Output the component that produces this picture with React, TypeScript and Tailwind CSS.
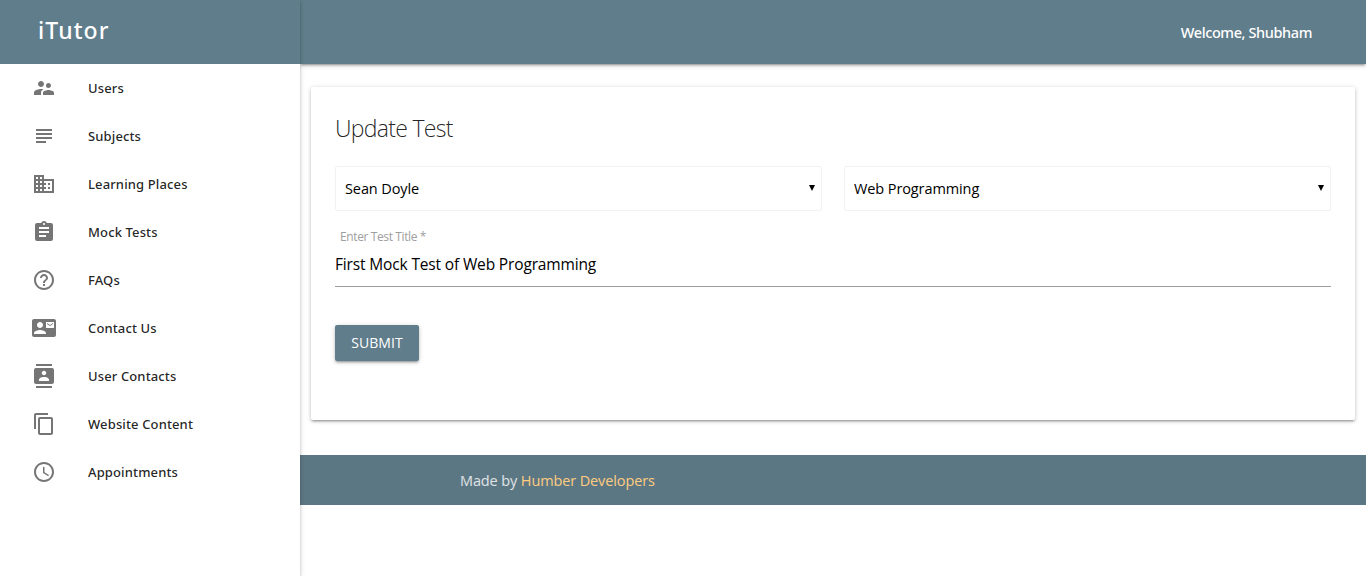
import {
  MdSupervisorAccount,
  MdSubject,
  MdBusiness,
  MdAssignment,
  MdHelpOutline,
  MdContactMail,
  MdContacts,
  MdContentCopy,
  MdAccessTime,
} from "react-icons/md";

const links = [
  { label: "Users", Icon: MdSupervisorAccount },
  { label: "Subjects", Icon: MdSubject },
  { label: "Learning Places", Icon: MdBusiness },
  { label: "Mock Tests", Icon: MdAssignment },
  { label: "FAQs", Icon: MdHelpOutline },
  { label: "Contact Us", Icon: MdContactMail },
  { label: "User Contacts", Icon: MdContacts },
  { label: "Website Content", Icon: MdContentCopy },
  { label: "Appointments", Icon: MdAccessTime },
];

function Sidebar() {
  return (
    <aside className="z-20 h-[576px] w-[300px] shrink-0 bg-white shadow-[0_2px_2px_0_rgba(0,0,0,0.14),0_3px_1px_-2px_rgba(0,0,0,0.12),0_1px_5px_0_rgba(0,0,0,0.2)]">
      <div className="flex h-16 items-center bg-[#607d8b] pb-1 pl-[38px]">
        <span className="text-[23px] leading-8 font-medium tracking-[1.1px] text-white">iTutor</span>
      </div>
      <nav>
        {links.map(({ label, Icon }) => (
          <a key={label} className="flex h-12 items-center gap-8 pl-8 text-black/87">
            <Icon className="size-6 text-black/54" />
            <span className="text-[13px] leading-12 font-medium tracking-[0.13px] whitespace-nowrap">{label}</span>
          </a>
        ))}
      </nav>
    </aside>
  );
}

function Select({ value }: { value: string }) {
  return (
    <div className="relative h-[45px] flex-1">
      <select className="h-full w-full appearance-none rounded-[2px] border border-[#f2f2f2] bg-white pl-[9px] font-['Open_Sans',sans-serif] text-[14.5px] tracking-[-0.1px] text-black">
        <option>{value}</option>
      </select>
      <svg viewBox="0 0 6 6" className="pointer-events-none absolute top-[19px] right-[7px] size-[6px]">
        <path d="M0 0h6L3 6z" />
      </svg>
    </div>
  );
}

export default function App() {
  return (
    <div className="flex h-[576px] overflow-hidden bg-white font-['Noto_Sans','Open_Sans',sans-serif]">
      <Sidebar />
      <div className="flex min-w-0 flex-1 flex-col">
        <header className="flex h-16 shrink-0 items-center justify-end bg-[#607d8b] pt-[2px] pr-[54px] shadow-[0_2px_2px_0_rgba(0,0,0,0.14),0_3px_1px_-2px_rgba(0,0,0,0.12),0_1px_5px_0_rgba(0,0,0,0.2)]">
          <span className="text-[14.5px] font-medium tracking-[-0.4px] text-white">Welcome, Shubham</span>
        </header>
        <main className="mt-[23px] mr-[11px] ml-[11px] h-[333px] shrink-0 rounded-[2px] bg-white px-6 font-['Open_Sans',sans-serif] shadow-[0_2px_2px_0_rgba(0,0,0,0.14),0_3px_1px_-2px_rgba(0,0,0,0.12),0_1px_5px_0_rgba(0,0,0,0.2)]">
          <h1 className="pt-[25px] text-[23px] leading-8 font-light tracking-[-0.7px] text-black/87">Update Test</h1>
          <div className="mt-[22px] flex gap-[22px]">
            <Select value="Sean Doyle" />
            <Select value="Web Programming" />
          </div>
          <label className="mt-[17px] block pl-[5px] text-[12px] leading-[18px] tracking-[-0.38px] text-[#9e9e9e]">Enter Test Title *</label>
          <input
            className="block h-[41px] w-full border-b border-[#9e9e9e] pb-[4px] text-[15.5px] tracking-[-0.15px] text-black outline-none"
            defaultValue="First Mock Test of Web Programming"
          />
          <button className="mt-[38px] flex h-9 w-[84px] items-center justify-center rounded-[2px] bg-[#607d8b] pb-px text-[14px] tracking-[0.1px] text-white shadow-[0_2px_2px_0_rgba(0,0,0,0.14),0_3px_1px_-2px_rgba(0,0,0,0.12),0_1px_5px_0_rgba(0,0,0,0.2)]">
            SUBMIT
          </button>
        </main>
        <footer className="mt-[35px] flex h-[50px] shrink-0 items-center bg-[#5c7784] pt-[2px] pl-40">
          <p className="font-['Open_Sans',sans-serif] text-[14.5px] tracking-[-0.12px] text-white/80">
            Made by <a className="text-[#ffcc80]">Humber Developers</a>
          </p>
        </footer>
      </div>
    </div>
  );
}
